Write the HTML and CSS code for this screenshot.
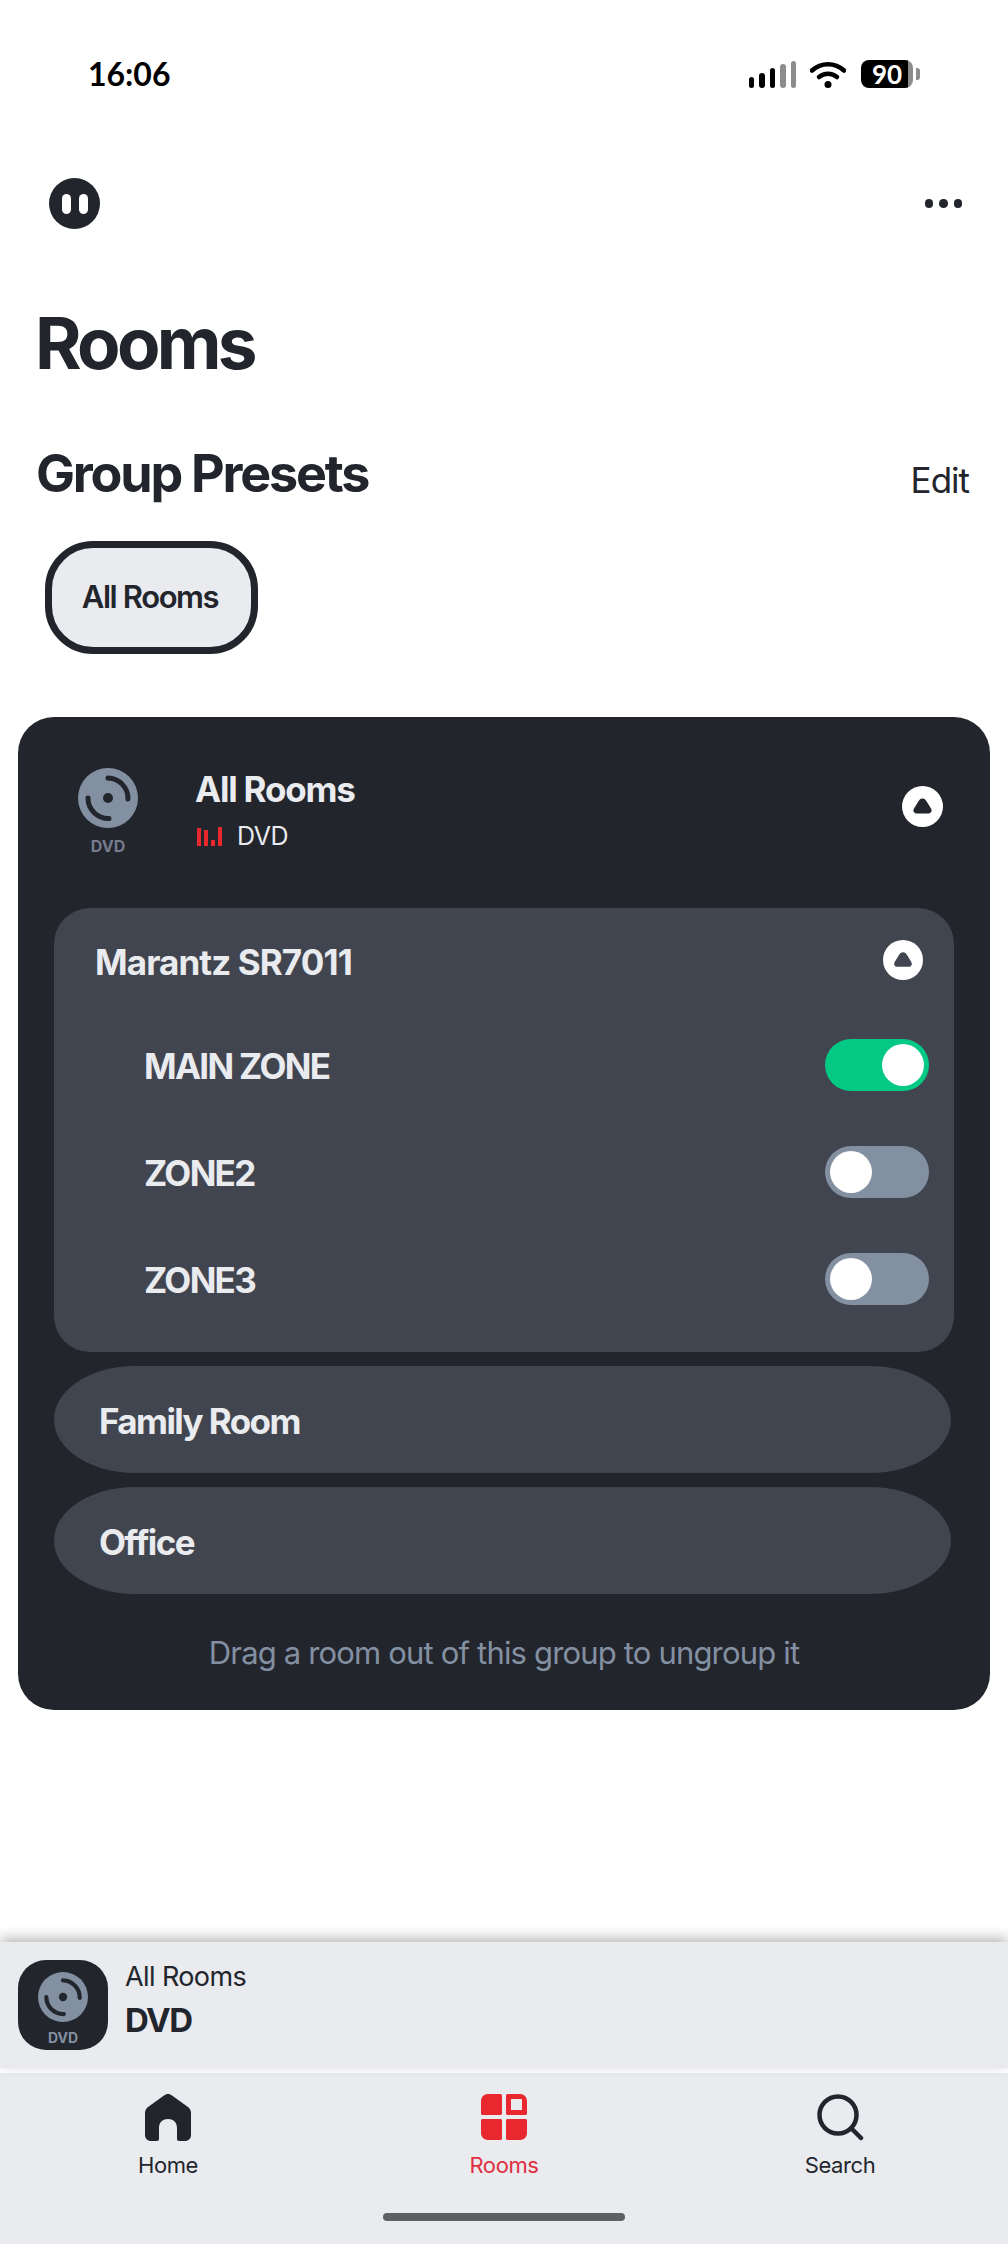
FILE: index.html
```html
<!DOCTYPE html>
<html lang="en">
  <head>
    <meta charset="UTF-8" />
    <meta name="viewport" content="width=device-width, initial-scale=1.0" />
    <title>Rooms</title>
    <link rel="stylesheet" href="styles.css">
  </head>
  <body>
    <svg class="defs" width="0" height="0">
      <symbol id="disc" viewBox="0 0 60 60">
        <circle cx="30" cy="30" r="30" fill="#8390a2" />
        <circle cx="30" cy="30" r="5" fill="#23252d" />
        <path d="M30 10 A20.5 20.5 0 0 1 50 31" fill="none" stroke="#23252d" stroke-width="5" stroke-linecap="round" />
        <path d="M10 30 A20.5 20.5 0 0 0 31 50.5" fill="none" stroke="#23252d" stroke-width="5" stroke-linecap="round" />
      </symbol>
      <symbol id="blob" viewBox="0 0 41 41">
        <path d="M20.5 12.500 C22.500 12.500 23.500 13.500 25 16 L29 22.500 C30.500 25 29 27.500 26 27.500 H15 C12 27.500 10.500 25 12 22.500 L16 16 C17.500 13.500 18.500 12.500 20.500 12.500 Z" />
      </symbol>
    </svg>

    <header class="status-bar">
      <span class="clock">16:06</span>
      <div class="status-icons">
        <div class="signal">
          <i class="s1"></i><i class="s2"></i><i class="s3"></i><i class="s4"></i><i class="s5"></i>
        </div>
        <svg class="wifi" width="36" height="27" viewBox="0 0 36 27">
          <path d="M2 9.5 C11 1 25 1 34 9.5" fill="none" stroke="#000" stroke-width="4.5" stroke-linecap="round" />
          <path d="M9 16 C14 11.5 22 11.5 27 16" fill="none" stroke="#000" stroke-width="4.5" stroke-linecap="round" />
          <circle cx="18" cy="23.5" r="3.5" fill="#000" />
        </svg>
        <div class="battery"><span>90</span></div>
        <div class="battery-tip"></div>
      </div>
    </header>

    <div class="toolbar">
      <button class="pause-btn"><i></i><i></i></button>
      <div class="more"><i></i><i></i><i></i></div>
    </div>

    <main class="content">
      <h1 class="page-title">Rooms</h1>

      <div class="presets-head">
        <h2>Group Presets</h2>
        <span class="edit">Edit</span>
      </div>
      <button class="preset-chip">All Rooms</button>

      <section class="group-card">
        <div class="group-head">
          <div class="source">
            <svg width="60" height="60"><use href="#disc" /></svg>
            <span>DVD</span>
          </div>
          <div class="group-info">
            <div class="group-name">All Rooms</div>
            <div class="group-source">
              <svg width="26" height="19" viewBox="0 0 26 19">
                <rect x="0" y="1" width="4" height="18" fill="#e8272f" />
                <rect x="7" y="3" width="4" height="16" fill="#e8272f" />
                <rect x="14" y="13" width="4" height="6" fill="#e8272f" />
                <rect x="21" y="0" width="4" height="19" fill="#e8272f" />
              </svg>
              <span>DVD</span>
            </div>
          </div>
          <svg class="chevron" width="41" height="41" viewBox="0 0 41 41">
            <circle cx="20.5" cy="20.5" r="20.5" fill="#fff" />
            <use href="#blob" fill="#23252d" />
          </svg>
        </div>

        <div class="device">
          <div class="device-row">
            <span class="device-name">Marantz SR7011</span>
            <svg class="chevron small" width="40" height="40" viewBox="0 0 41 41">
              <circle cx="20.5" cy="20.5" r="20.5" fill="#fff" />
              <use href="#blob" fill="#41454f" />
            </svg>
          </div>
          <div class="zone-row">
            <span>MAIN ZONE</span>
            <div class="toggle on"><i></i></div>
          </div>
          <div class="zone-row">
            <span>ZONE2</span>
            <div class="toggle"><i></i></div>
          </div>
          <div class="zone-row">
            <span>ZONE3</span>
            <div class="toggle"><i></i></div>
          </div>
        </div>

        <div class="room-pill">Family Room</div>
        <div class="room-pill">Office</div>

        <p class="hint">Drag a room out of this group to ungroup it</p>
      </section>
    </main>

    <div class="mini-player">
      <div class="mini-art">
        <svg width="50" height="50"><use href="#disc" /></svg>
        <span>DVD</span>
      </div>
      <div class="mini-text">
        <div class="mini-room">All Rooms</div>
        <div class="mini-source">DVD</div>
      </div>
    </div>

    <nav class="tab-bar">
      <div class="tabs">
        <div class="tab">
          <svg width="48" height="48" viewBox="0 0 48 48">
            <path d="M24 1 C25.5 1 27 1.6 28 2.5 L44 14 C46 15.5 47 17.5 47 20 V42 C47 45.5 44.5 48 41 48 H35 C33.500 48 33 47 33 45.500 V35 C33 29 29 26 24 26 C19 26 15 29 15 35 V45.500 C15 47 14.500 48 13 48 H7 C3.500 48 1 45.500 1 42 V20 C1 17.500 2 15.500 4 14 L20 2.500 C21 1.600 22.500 1 24 1 Z" fill="#23252d" />
          </svg>
          <span>Home</span>
        </div>
        <div class="tab active">
          <svg width="48" height="48" viewBox="0 0 48 48">
            <path d="M8 1 H20 C21.500 1 22 1.500 22 3 V20 C22 21.500 21.500 22 20 22 H3 C1.500 22 1 21.500 1 20 V8 C1 4 4 1 8 1 Z" fill="#e8272f" />
            <path fill-rule="evenodd" d="M28 1 H40 C44 1 47 4 47 8 V20 C47 21.500 46.500 22 45 22 H28 C26.500 22 26 21.500 26 20 V3 C26 1.500 26.500 1 28 1 Z M31 6 V17 H42 V6 Z" fill="#e8272f" />
            <path d="M3 26 H20 C21.500 26 22 26.500 22 28 V45 C22 46.500 21.500 47 20 47 H8 C4 47 1 44 1 40 V28 C1 26.500 1.500 26 3 26 Z" fill="#e8272f" />
            <path d="M28 26 H45 C46.500 26 47 26.500 47 28 V40 C47 44 44 47 40 47 H28 C26.500 47 26 46.500 26 45 V28 C26 26.500 26.500 26 28 26 Z" fill="#e8272f" />
          </svg>
          <span>Rooms</span>
        </div>
        <div class="tab">
          <svg width="48" height="48" viewBox="0 0 48 48">
            <circle cx="22" cy="22" r="18.500" fill="none" stroke="#23252d" stroke-width="4.500" />
            <path d="M35.500 35.500 L45 45" fill="none" stroke="#23252d" stroke-width="4.500" stroke-linecap="round" />
          </svg>
          <span>Search</span>
        </div>
      </div>
      <div class="home-indicator"></div>
    </nav>
  </body>
</html>
```

FILE: styles.css
```css
* {
  box-sizing: border-box;
}

body {
  margin: 0;
  padding: 0;
  height: 2244px;
  overflow: hidden;
  background: #fff;
  font-family: Inter, Roboto, sans-serif;
  color: #23252d;
  display: flex;
  flex-direction: column;
}

.defs {
  position: absolute;
}

/* status bar */
.status-bar {
  height: 106px;
  padding: 42px 88px 0 88px;
  display: flex;
  justify-content: space-between;
  align-items: flex-start;
  flex-shrink: 0;
}

.clock {
  font-family: Lato, sans-serif;
  font-size: 32px;
  font-weight: 700;
  line-height: 40px;
  color: #000;
  margin-top: 12px;
}

.status-icons {
  display: flex;
  align-items: flex-start;
  margin-top: 18px;
}

.signal {
  display: flex;
  align-items: flex-end;
  gap: 5px;
  height: 28px;
  margin-right: 14px;
}

.signal i {
  display: block;
  width: 5.500px;
  border-radius: 3px;
  background: #000;
}

.signal .s1 { height: 11px; }
.signal .s2 { height: 15px; }
.signal .s3 { height: 20px; }
.signal .s4 { height: 24px; background: #8c8c8c; }
.signal .s5 { height: 27px; background: #8c8c8c; }

.wifi {
  margin-right: 15px;
  margin-top: 1px;
}

.battery {
  width: 52px;
  height: 28px;
  border-radius: 8px;
  background: linear-gradient(to right, #000 90%, #8c8c8c 90%);
  color: #fff;
  font-family: Lato, sans-serif;
  font-weight: 700;
  font-size: 26px;
  line-height: 28px;
  text-align: center;
}

.battery-tip {
  width: 4px;
  height: 12px;
  margin: 8px 0 0 3px;
  border-radius: 0 3px 3px 0;
  background: #8c8c8c;
}

/* toolbar */
.toolbar {
  height: 71px;
  padding: 0 46px 0 49px;
  margin-top: 62px;
  display: flex;
  justify-content: space-between;
  align-items: center;
  flex-shrink: 0;
}

.pause-btn {
  width: 51px;
  height: 51px;
  padding: 0;
  border: none;
  border-radius: 50%;
  background: #23252d;
  display: flex;
  align-items: center;
  justify-content: center;
  gap: 8px;
}

.pause-btn i {
  width: 9px;
  height: 20px;
  border-radius: 5px;
  background: #fff;
}

.more {
  display: flex;
  gap: 6px;
}

.more i {
  width: 8.500px;
  height: 8.500px;
  border-radius: 50%;
  background: #23252d;
}

/* main */
.content {
  flex: 1;
  min-height: 0;
}

.page-title {
  margin: 64px 0 0;
  padding-left: 35px;
  font-size: 71px;
  font-weight: 700;
  line-height: 80px;
  letter-spacing: -3.700px;
}

.presets-head {
  margin-top: 61px;
  padding: 0 39px 0 36px;
  display: flex;
  justify-content: space-between;
  align-items: flex-end;
}

.presets-head h2 {
  margin: 0;
  font-size: 52px;
  font-weight: 700;
  line-height: 60px;
  letter-spacing: -2.200px;
}

.edit {
  font-size: 35px;
  line-height: 48px;
  letter-spacing: -1px;
}

.preset-chip {
  display: block;
  margin: 37px 0 0 45px;
  width: 213px;
  height: 113px;
  padding: 0 3px 2px 0;
  border: 7px solid #23252d;
  border-radius: 48px;
  background: #e9ebef;
  color: #23252d;
  font-family: inherit;
  font-size: 31px;
  font-weight: 600;
  letter-spacing: -1.400px;
}

.group-card {
  margin: 63px 18px 0;
  height: 993px;
  padding: 0 36px;
  border-radius: 36px;
  background: #23252d;
  color: #e9ebef;
}

.group-head {
  height: 191px;
  display: flex;
  align-items: flex-start;
}

.source {
  width: 60px;
  margin: 51px 0 0 24px;
  display: flex;
  flex-direction: column;
  align-items: center;
}

.source svg {
  display: block;
}

.source span {
  margin-top: 9px;
  font-size: 16px;
  font-weight: 700;
  line-height: 19px;
  color: #747c8e;
}

.group-info {
  flex: 1;
  margin: 50px 0 0 57px;
}

.group-name {
  font-size: 35px;
  font-weight: 700;
  line-height: 44px;
  letter-spacing: -1.200px;
}

.group-source {
  margin-top: 10px;
  display: flex;
  align-items: center;
  gap: 14px;
  padding-left: 2px;
  font-size: 25px;
  line-height: 30px;
  letter-spacing: -0.500px;
}

.chevron {
  flex-shrink: 0;
}

.group-head .chevron {
  margin: 69px 11px 0 0;
}

.device {
  height: 444px;
  padding-right: 25px;
  border-radius: 36px;
  background: #41454f;
}

.device-row {
  height: 103px;
  padding: 0 6px 0 41px;
  display: flex;
  justify-content: space-between;
  align-items: center;
}

.device-name {
  padding-top: 5px;
  font-size: 35px;
  font-weight: 700;
  letter-spacing: -0.900px;
}

.zone-row {
  height: 107px;
  padding-left: 90px;
  display: flex;
  justify-content: space-between;
  align-items: center;
  font-size: 35px;
  font-weight: 700;
  letter-spacing: -1.700px;
}

.zone-row span {
  padding-top: 3px;
}

.toggle {
  width: 104px;
  height: 52px;
  padding: 5px;
  border-radius: 26px;
  background: #8390a2;
  display: flex;
}

.toggle i {
  width: 42px;
  height: 42px;
  border-radius: 50%;
  background: #fff;
}

.toggle.on {
  background: #04c985;
  justify-content: flex-end;
}

.room-pill {
  height: 107px;
  width: 897px;
  margin-top: 14px;
  padding: 3px 0 0 45px;
  border-radius: 82px / 54px;
  background: #41454f;
  display: flex;
  align-items: center;
  font-size: 35px;
  font-weight: 700;
  letter-spacing: -1.600px;
}

.hint {
  margin: 37px 0 0;
  text-align: center;
  font-size: 31px;
  line-height: 44px;
  letter-spacing: -0.830px;
  color: #8390a2;
}

/* now playing */
.mini-player {
  height: 126px;
  padding: 18px;
  display: flex;
  align-items: flex-start;
  gap: 17px;
  flex-shrink: 0;
  background: #e9ebef;
  box-shadow: 0 -4px 12px rgba(0, 0, 0, 0.28);
  position: relative;
}

.mini-art {
  width: 90px;
  height: 90px;
  padding-top: 12px;
  border-radius: 28px;
  background: #23252d;
  display: flex;
  flex-direction: column;
  align-items: center;
}

.mini-art svg {
  display: block;
}

.mini-art span {
  margin-top: 8px;
  font-size: 14px;
  font-weight: 700;
  line-height: 16px;
  color: #8390a2;
}

.mini-room {
  font-size: 27px;
  line-height: 34px;
  letter-spacing: -0.600px;
}

.mini-source {
  margin-top: 6px;
  font-size: 33px;
  font-weight: 700;
  line-height: 40px;
  letter-spacing: -1.500px;
}

/* tab bar */
.tab-bar {
  height: 171px;
  margin-top: 5px;
  flex-shrink: 0;
  background: #e9ebef;
  display: flex;
  flex-direction: column;
  align-items: center;
}

.tabs {
  width: 100%;
  height: 140px;
  padding-top: 20px;
  display: grid;
  grid-template-columns: repeat(3, 1fr);
}

.tab {
  display: flex;
  flex-direction: column;
  align-items: center;
  font-size: 22px;
  line-height: 30px;
  letter-spacing: -0.400px;
}

.tab svg {
  display: block;
  margin-bottom: 9px;
}

.tab.active {
  color: #e03040;
}

.home-indicator {
  width: 242px;
  height: 8px;
  border-radius: 4px;
  background: #5f6062;
}
```
